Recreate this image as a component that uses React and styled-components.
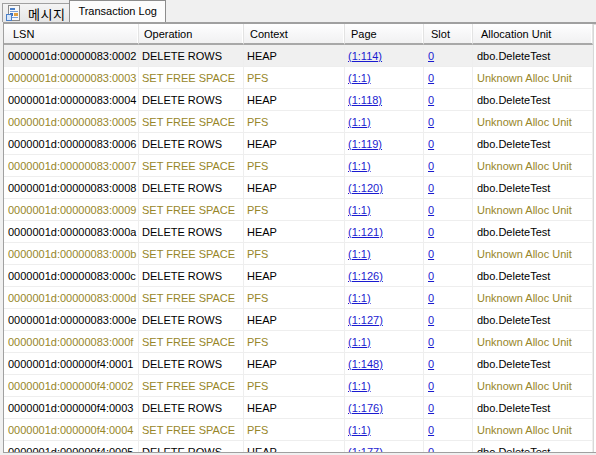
import React from "react";
import styled, { createGlobalStyle } from "styled-components";

const Global = createGlobalStyle`
  html, body { margin: 0; padding: 0; background: #f0f0f0; }
  body { font-family: "Liberation Sans", Arial, sans-serif; }
`;

const Window = styled.div`
  width: 596px;
  height: 455px;
  overflow: hidden;
  background: #f0f0f0;
  display: flex;
  flex-direction: column;
`;

const TabStrip = styled.div`
  height: 22px;
  display: flex;
  align-items: flex-end;
  padding-left: 2px;
  flex: none;
`;

const Tab = styled.div`
  box-sizing: border-box;
  display: flex;
  align-items: center;
  gap: 6px;
  border: 1px solid #a0a0a0;
  border-bottom: none;
  font-size: 11px;
  color: #000;
  ${(p) =>
    p.$active
      ? `height: 22px; padding: 0 8px 1px 8px; background: #fcfcfc; border-color: #8c8c8c; margin-left: -1px;`
      : `height: 19px; padding: 0 4px 0 3px; background: linear-gradient(#f4f4f4, #e6e6e6);`}
`;

const KoLabel = styled.span`
  font-family: "Noto Sans CJK KR", "Liberation Sans", sans-serif;
  font-size: 13px;
  line-height: 1;
  letter-spacing: 0.5px;
`;

const Panel = styled.div`
  flex: 1;
  margin-left: 3px;
  margin-bottom: 2px;
  border-left: 1px solid #a0a0a0;
  border-top: 2px solid #a0a0a0;
  border-bottom: 1px solid #a0a0a0;
  background: #fff;
  overflow: hidden;
  box-shadow: inset 0 1px 0 #dcdcdc;
`;

const Grid = styled.div`
  display: grid;
  grid-template-columns: 135px 105px 101px 79px 49px 120px;
  width: 589px;
  border-right: 1px solid #d8d8d8;
`;

const HeadCell = styled.div`
  box-sizing: border-box;
  height: 21px;
  padding: 0 0 0 ${(p) => p.$pad || 6}px;
  display: flex;
  align-items: center;
  font-size: 11px;
  color: #000;
  background: linear-gradient(#ffffff 0%, #f8f8f9 45%, #f1f1f2 100%);
  border-right: 1px solid #e3e3e3;
  border-bottom: 2px solid #a8a8a8;
  box-shadow: inset -1px 0 0 #fff;
`;

const Cell = styled.div`
  box-sizing: border-box;
  height: 22px;
  padding-left: ${(p) => p.$pad || 3}px;
  display: flex;
  align-items: center;
  font-size: 11px;
  white-space: nowrap;
  overflow: hidden;
  color: ${(p) => (p.$dim ? "#978628" : "#000")};
  background: ${(p) => (p.$sel ? "#f0f0f0" : "#fff")};
  border-right: 1px solid #eeeeee;
  border-bottom: 1px solid #eeeeee;
`;

const Link = styled.span`
  color: #1a1ad0;
  text-decoration: underline;
`;

const DocIcon = () => (
  <svg width="16" height="16" viewBox="0 0 16 16">
    <rect x="2.5" y="0.5" width="11" height="15" fill="#f8f8f8" stroke="#8a8a8a" />
    <rect x="4" y="3" width="5" height="2" fill="#4a7fc8" />
    <rect x="4" y="6" width="8" height="1" fill="#7aa0d8" />
    <rect x="4" y="8" width="3" height="3" fill="#3a6fc0" />
    <rect x="8" y="8" width="4" height="3" fill="#e0a040" />
    <rect x="4" y="12" width="8" height="1" fill="#7aa0d8" />
    <rect x="0.5" y="9.5" width="5" height="6" fill="#d8e6f8" stroke="#4a7fc8" />
  </svg>
);

const pages = [
  "(1:114)", "(1:118)", "(1:119)", "(1:120)", "(1:121)",
  "(1:126)", "(1:127)", "(1:148)", "(1:176)", "(1:177)",
];
const suffixes = [
  "00000083:0002", "00000083:0003", "00000083:0004", "00000083:0005",
  "00000083:0006", "00000083:0007", "00000083:0008", "00000083:0009",
  "00000083:000a", "00000083:000b", "00000083:000c", "00000083:000d",
  "00000083:000e", "00000083:000f", "000000f4:0001", "000000f4:0002",
  "000000f4:0003", "000000f4:0004", "000000f4:0005",
];

const rows = suffixes.map((s, i) => {
  const del = i % 2 === 0;
  return {
    lsn: "0000001d:" + s,
    op: del ? "DELETE ROWS" : "SET FREE SPACE",
    ctx: del ? "HEAP" : "PFS",
    page: del ? pages[i / 2] : "(1:1)",
    slot: "0",
    unit: del ? "dbo.DeleteTest" : "Unknown Alloc Unit",
    dim: !del,
  };
});

const headers = [
  ["LSN", 9],
  ["Operation", 5],
  ["Context", 6],
  ["Page", 6],
  ["Slot", 7],
  ["Allocation Unit", 8],
];

export default function App() {
  return (
    <>
      <Global />
      <Window>
        <TabStrip>
          <Tab>
            <DocIcon />
            <KoLabel>메시지</KoLabel>
          </Tab>
          <Tab $active>Transaction Log</Tab>
        </TabStrip>
        <Panel>
          <Grid>
            {headers.map(([h, p]) => (
              <HeadCell key={h} $pad={p}>{h}</HeadCell>
            ))}
            {rows.map((r, i) => (
              <React.Fragment key={r.lsn}>
                <Cell $dim={r.dim} $sel={i === 0} $pad={4}>{r.lsn}</Cell>
                <Cell $dim={r.dim} $sel={i === 0} $pad={3}>{r.op}</Cell>
                <Cell $dim={r.dim} $sel={i === 0} $pad={3}>{r.ctx}</Cell>
                <Cell $sel={i === 0} $pad={3}><Link>{r.page}</Link></Cell>
                <Cell $sel={i === 0} $pad={4}><Link>{r.slot}</Link></Cell>
                <Cell $dim={r.dim} $sel={i === 0} $pad={4}>{r.unit}</Cell>
              </React.Fragment>
            ))}
          </Grid>
        </Panel>
      </Window>
    </>
  );
}
